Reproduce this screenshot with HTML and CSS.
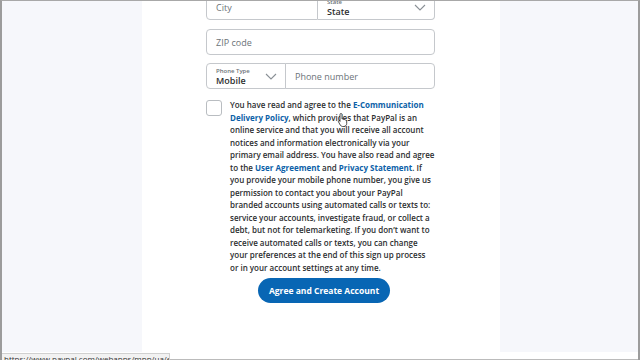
FILE: index.html
```html
<!DOCTYPE html>
<html>
<head>
<meta charset="utf-8">
<link rel="stylesheet" href="styles.css">
</head>
<body>
<div class="window">
  <div class="page">
    <aside class="side"></aside>
    <main class="main">
      <form class="form">
        <div class="row first">
          <div class="field city"><span class="ph">City</span></div>
          <div class="field select state">
            <div class="sel-text"><span class="lbl">State</span><span class="val">State</span></div>
            <svg class="chev" width="12" height="7" viewBox="0 0 12 7"><path d="M1 1l5 5 5-5" fill="none" stroke="#8a9096" stroke-width="1.1"/></svg>
          </div>
        </div>
        <div class="row">
          <div class="field full"><span class="ph">ZIP code</span></div>
        </div>
        <div class="row">
          <div class="field select ptype">
            <div class="sel-text"><span class="lbl">Phone Type</span><span class="val">Mobile</span></div>
            <svg class="chev" width="12" height="7" viewBox="0 0 12 7"><path d="M1 1l5 5 5-5" fill="none" stroke="#8a9096" stroke-width="1.1"/></svg>
          </div>
          <div class="field pnum"><span class="ph">Phone number</span></div>
        </div>
        <div class="agree">
          <span class="box"></span>
          <p class="legal">You have read and agree to the <a>E&#8209;Communication Delivery Policy</a>, which provides that PayPal is an online service and that you will receive all account notices and information electronically via your primary email address. You have also read and agree to the <a>User Agreement</a> and <a>Privacy Statement</a>. If you provide your mobile phone number, you give us permission to contact you about your PayPal branded accounts using automated calls or texts to: service your accounts, investigate fraud, or collect a debt, but not for telemarketing. If you don’t want to receive automated calls or texts, you can change your preferences at the end of this sign up process or in your account settings at any time.</p>
        </div>
        <div class="actions"><button type="button" class="btn">Agree and Create Account</button></div>
      </form>
    </main>
    <aside class="side right"></aside>
  </div>
  <div class="status"><span class="url">https://www.paypal.com/webapps/mpp/ua/esign-full</span></div>
  <svg class="cursor" width="12" height="15" viewBox="0 0 12 15"><path d="M4 1.5c.6 0 1 .4 1 1V7l.3-.1c.5-.2 1 0 1.2.4l.2.3.4-.1c.5-.1 1 .1 1.1.6l.5-.1c.6 0 1 .4 1 1v2.6c0 1.5-1.2 2.9-2.8 2.9H5.6c-1 0-1.8-.6-2.3-1.4L1.5 9.9c-.3-.5-.1-1.1.4-1.3.4-.2.9 0 1.2.4L3 9.4V2.5c0-.6.4-1 1-1z" fill="#fff" stroke="#222" stroke-width="0.8"/></svg>
</div>
</body>
</html>
```
FILE: styles.css
```css
* { box-sizing: border-box; margin: 0; padding: 0; }
html, body { width: 640px; height: 360px; overflow: hidden; }
body { font-family: "Open Sans", "Noto Sans", sans-serif; color: #2c2e2f; background: #fff; }
.window { position: relative; width: 640px; height: 360px; border-top: 1px solid #a8a8a8; border-left: 2px solid #9c9c9c; border-right: 2px solid #9c9c9c; overflow: hidden; }
.page { display: flex; height: 351px; }
.side { width: 140px; background: #f6f7fb; flex: none; }
.side.right { flex: 1; }
.main { width: 358px; background: #fff; flex: none; padding-left: 64px; }
.form { width: 229px; display: flex; flex-direction: column; }
.row { display: flex; height: 26px; margin-top: 8px; }
.row.first { margin-top: -7px; }
.row.first + .row { margin-top: 9px; }
.field { border: 1px solid #c5c8cc; border-radius: 4px; background: #fff; display: flex; align-items: center; padding-left: 9px; }
.ph { font-size: 9px; color: #6c7378; font-weight: 500; }
.city { width: 112px; border-top-right-radius: 0; border-bottom-right-radius: 0; }
.state { flex: 1; border-left: none; border-top-left-radius: 0; border-bottom-left-radius: 0; }
.full { flex: 1; }
.ptype { width: 80px; border-top-right-radius: 0; border-bottom-right-radius: 0; }
.pnum { flex: 1; border-left: 1px solid #c5c8cc; margin-left: -1px; border-top-left-radius: 0; border-bottom-left-radius: 0; }
.select { justify-content: space-between; padding-right: 8px; }
.sel-text { display: flex; flex-direction: column; line-height: 1; padding-top: 1px; }
.lbl { font-size: 6px; color: #6c7378; font-weight: 600; margin-bottom: 2px; }
.val { font-size: 9px; font-weight: 600; color: #2c2e2f; }
.chev { flex: none; }
.agree { display: flex; gap: 8px; margin-top: 10px; }
.box { width: 16px; height: 16px; border: 1px solid #b9bdc1; border-radius: 3px; flex: none; margin-top: 1px; }
.legal { font-size: 8px; line-height: 12.5px; font-weight: 600; color: #2c2e2f; width: 207px; }
.legal a { color: #0c5fa8; font-weight: 700; }
.actions { display: flex; justify-content: center; margin-top: 4px; padding-left: 7px; }
.btn { width: 132px; height: 25px; border: none; border-radius: 13px; background: #0866b4; color: #fff; font-family: inherit; font-weight: 700; font-size: 8.5px; }
.status { height: 8px; background: #fff; position: relative; border-bottom: 1px solid #bbb; }
.url { position: absolute; left: 0; top: 1px; width: 168px; height: 10px; background: #f2f2f2; border-top: 1px solid #d0d0d0; border-right: 1px solid #d0d0d0; font-size: 8px; line-height: 9px; color: #333; padding-left: 2px; white-space: nowrap; overflow: hidden; }
.cursor { position: absolute; left: 335px; top: 111px; }
```
